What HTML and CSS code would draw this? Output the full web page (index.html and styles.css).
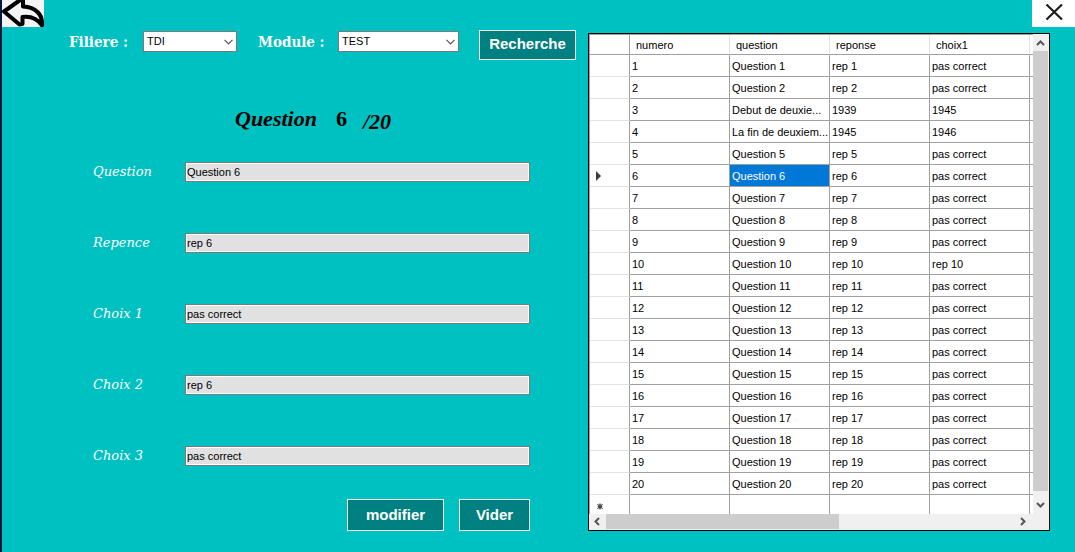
FILE: index.html
```html
<!DOCTYPE html>
<html lang="fr">
<head>
<meta charset="utf-8">
<title>Questions</title>
<link rel="stylesheet" href="styles.css">
</head>
<body>
<header class="topbar">
  <button class="back" type="button" aria-label="Retour">
    <svg width="42" height="27" viewBox="0 0 42 27"><path d="M19.500 -1 L2 11.500 L17.500 24.500 L20.500 24 L20.500 17 C29 16 35 18 40 25.500 C41 15 34 7 21 6.500 L21 -1 Z" fill="#f4f4f4" stroke="#000" stroke-width="4" stroke-linejoin="round"/></svg>
  </button>
  <button class="close" type="button" aria-label="Fermer">
    <svg width="43" height="27" viewBox="0 0 43 27"><path d="M14.500 4.500 L30 19.500 M30 4.500 L14.500 19.500" stroke="#1c1c1c" stroke-width="2.200" fill="none"/></svg>
  </button>
</header>
<main class="layout">
  <section class="editor">
    <form class="filters">
      <label class="filter-label" for="filiere">Filiere :</label>
      <span class="combo combo-small"><select id="filiere"><option>TDI</option></select><svg class="chevron" width="9" height="6" viewBox="0 0 9 6"><path d="M.5 .8 L4.500 4.800 L8.500 .8" fill="none" stroke="#555" stroke-width="1.200"/></svg></span>
      <label class="filter-label second" for="module">Module :</label>
      <span class="combo"><select id="module"><option>TEST</option></select><svg class="chevron" width="9" height="6" viewBox="0 0 9 6"><path d="M.5 .8 L4.500 4.800 L8.500 .8" fill="none" stroke="#555" stroke-width="1.200"/></svg></span>
      <button class="btn search" type="button">Recherche</button>
    </form>
    <h1 class="title"><span>Question</span><span class="number">6</span><span class="total">/20</span></h1>
    <form class="fields">
      <div class="field"><label for="question">Question</label><input id="question" type="text" value="Question 6"></div>
      <div class="field"><label for="reponse">Repence</label><input id="reponse" type="text" value="rep 6"></div>
      <div class="field"><label for="choix1">Choix 1</label><input id="choix1" type="text" value="pas correct"></div>
      <div class="field"><label for="choix2">Choix 2</label><input id="choix2" type="text" value="rep 6"></div>
      <div class="field"><label for="choix3">Choix 3</label><input id="choix3" type="text" value="pas correct"></div>
      <div class="actions"><button class="btn edit" type="button">modifier</button><button class="btn clear" type="button">Vider</button></div>
    </form>
  </section>
  <section class="grid-box">
    <div class="viewport">
      <table class="grid">
        <colgroup><col class="c-head"><col class="c-data"><col class="c-data"><col class="c-data"><col class="c-data"><col></colgroup>
        <thead><tr><th></th><th>numero</th><th>question</th><th>reponse</th><th>choix1</th><th></th></tr></thead>
        <tbody>
          <tr><th></th><td>1</td><td>Question 1</td><td>rep 1</td><td>pas correct</td><td></td></tr>
          <tr><th></th><td>2</td><td>Question 2</td><td>rep 2</td><td>pas correct</td><td></td></tr>
          <tr><th></th><td>3</td><td>Debut de deuxie...</td><td>1939</td><td>1945</td><td></td></tr>
          <tr><th></th><td>4</td><td>La fin de deuxiem...</td><td>1945</td><td>1946</td><td></td></tr>
          <tr><th></th><td>5</td><td>Question 5</td><td>rep 5</td><td>pas correct</td><td></td></tr>
          <tr><th><svg class="marker" width="5" height="10" viewBox="0 0 5 10"><path d="M0 0 L5 5 L0 10 Z" fill="#3c3c3c"/></svg></th><td>6</td><td class="selected">Question 6</td><td>rep 6</td><td>pas correct</td><td></td></tr>
          <tr><th></th><td>7</td><td>Question 7</td><td>rep 7</td><td>pas correct</td><td></td></tr>
          <tr><th></th><td>8</td><td>Question 8</td><td>rep 8</td><td>pas correct</td><td></td></tr>
          <tr><th></th><td>9</td><td>Question 9</td><td>rep 9</td><td>pas correct</td><td></td></tr>
          <tr><th></th><td>10</td><td>Question 10</td><td>rep 10</td><td>rep 10</td><td></td></tr>
          <tr><th></th><td>11</td><td>Question 11</td><td>rep 11</td><td>pas correct</td><td></td></tr>
          <tr><th></th><td>12</td><td>Question 12</td><td>rep 12</td><td>pas correct</td><td></td></tr>
          <tr><th></th><td>13</td><td>Question 13</td><td>rep 13</td><td>pas correct</td><td></td></tr>
          <tr><th></th><td>14</td><td>Question 14</td><td>rep 14</td><td>pas correct</td><td></td></tr>
          <tr><th></th><td>15</td><td>Question 15</td><td>rep 15</td><td>pas correct</td><td></td></tr>
          <tr><th></th><td>16</td><td>Question 16</td><td>rep 16</td><td>pas correct</td><td></td></tr>
          <tr><th></th><td>17</td><td>Question 17</td><td>rep 17</td><td>pas correct</td><td></td></tr>
          <tr><th></th><td>18</td><td>Question 18</td><td>rep 18</td><td>pas correct</td><td></td></tr>
          <tr><th></th><td>19</td><td>Question 19</td><td>rep 19</td><td>pas correct</td><td></td></tr>
          <tr><th></th><td>20</td><td>Question 20</td><td>rep 20</td><td>pas correct</td><td></td></tr>
          <tr class="new-row"><th><svg class="marker" width="8" height="7" viewBox="0 0 8 7"><circle cx="4" cy="3.500" r="2.300" fill="#444"/><path d="M4 .3 V6.700 M1.200 1.200 L6.800 5.800 M6.800 1.200 L1.200 5.800" stroke="#555" stroke-width="1"/></svg></th><td></td><td></td><td></td><td></td><td></td></tr>
        </tbody>
      </table>
    </div>
    <div class="vscroll">
      <svg class="arrow" width="16" height="17" viewBox="0 0 16 17"><path d="M4 11 L7.500 7.500 L11 11" fill="none" stroke="#555" stroke-width="2"/></svg>
      <div class="vthumb"></div>
      <svg class="arrow" width="16" height="23" viewBox="0 0 16 23"><path d="M4 12 L7.500 15.500 L11 12" fill="none" stroke="#555" stroke-width="2"/></svg>
    </div>
    <div class="hscroll">
      <svg class="arrow" width="17" height="16" viewBox="0 0 17 16"><path d="M10 4 L6.500 7.500 L10 11" fill="none" stroke="#555" stroke-width="2"/></svg>
      <div class="htrack"><div class="hthumb"></div></div>
      <svg class="arrow" width="17" height="16" viewBox="0 0 17 16"><path d="M6 4 L9.500 7.500 L6 11" fill="none" stroke="#555" stroke-width="2"/></svg>
    </div>
  </section>
</main>
</body>
</html>
```
FILE: styles.css
```css
* { box-sizing: border-box; }
html { background: #00c1c1; }
body {
  margin: 0;
  min-height: 100vh;
  background: #00c1c1;
  border-left: 2px solid #001a40;
  font-family: "Liberation Sans", Arial, sans-serif;
  font-size: 11px;
  color: #000;
}
svg { display: block; }

.topbar { display: flex; justify-content: space-between; }
.back, .close { padding: 0; border: 0; background: #fff; }
.back { background: #f4f4f4; }

.layout { display: flex; align-items: flex-start; padding: 3px 25px 21px 0; }
.editor { flex: 586 1 0; min-width: 0; }

.filters { display: flex; align-items: flex-start; padding: 0 12px 0 67px; }
.filter-label {
  width: 74px;
  font: bold 15px/24px "DejaVu Serif Condensed", "DejaVu Serif", serif;
  font-stretch: condensed;
  color: #fff;
  white-space: nowrap;
}
.filter-label.second { width: 80px; margin-left: 21px; }
.combo { position: relative; flex: 1; margin-top: 1px; }
.combo-small { flex: 0 0 94px; }
.combo select {
  display: block;
  width: 100%;
  height: 21px;
  padding: 0 0 1px 3px;
  appearance: none;
  border: 1px solid #7a7a7a;
  border-radius: 0;
  background: #fff;
  color: #000;
  font: 11px/18px "Liberation Sans", Arial, sans-serif;
}
.chevron { position: absolute; right: 4px; top: 8px; pointer-events: none; }
.btn {
  padding: 0;
  height: 32px;
  border: 1px solid #fff;
  background: #008080;
  color: #fff;
  font: bold 15px/18px "Liberation Sans", Arial, sans-serif;
}
.search { width: 97px; height: 30px; margin-left: 20px; padding-bottom: 3px; }

.title {
  display: flex;
  gap: 19px;
  margin: 45px 0 23px 233px;
  font: italic bold 22px/28px "Liberation Serif", serif;
}
.number { font-style: normal; }
.total { line-height: 34px; margin-left: -3px; }

.fields { padding: 0 58px 0 91px; }
.field { display: flex; align-items: center; height: 20px; margin-bottom: 51px; }
.field label {
  flex: 0 0 92px;
  font: italic 13px/20px "DejaVu Serif", serif;
  color: #fff;
}
.field input {
  flex: 1;
  min-width: 0;
  height: 20px;
  padding: 0 1px;
  border: 1px solid #7a7a7a;
  outline: 1px solid #fff;
  outline-offset: -2px;
  background: #e1e1e1;
  font: 11px/16px "Liberation Sans", Arial, sans-serif;
  color: #000;
}
.actions { display: flex; justify-content: flex-end; gap: 15px; margin-top: -18px; }
.edit { width: 97px; }
.clear { width: 71px; }

.grid-box {
  flex: 460 1 0;
  min-width: 0;
  display: grid;
  grid-template-columns: minmax(0, 1fr) 16px;
  margin-top: 3px;
  border: 1px solid #000;
  background: #f0f0f0;
}
.viewport { overflow: hidden; background: #fff; border: solid #a0a0a0; border-width: 1px 0 0 1px; }
.grid { width: 100%; table-layout: fixed; border-collapse: separate; border-spacing: 0; }
.c-head { width: 40px; }
.c-data { width: 100px; }
.grid th, .grid td {
  height: 22px;
  padding: 0 2px;
  border: solid #a0a0a0;
  border-width: 0 1px 1px 0;
  text-align: left;
  font-weight: normal;
  line-height: 18px;
  white-space: nowrap;
  overflow: hidden;
}
.grid th:last-child, .grid td:last-child { border-right: 0; padding: 0; }
.grid thead th { height: 20px; padding-left: 6px; border-right-color: #e3e3e3; }
.grid thead th:first-child { border-right-color: #a0a0a0; }
.grid tbody th { border-bottom-color: #e3e3e3; }
.grid .selected { background: #0078d7; color: #fff; }
.grid .new-row th, .grid .new-row td { height: 19px; border-bottom: 0; }
.marker { margin-left: 4px; }
.new-row .marker { margin-top: 4px; }

.vscroll { display: flex; flex-direction: column; padding-right: 1px; }
.vthumb { flex: 1; background: #cdcdcd; }
.hscroll { grid-column: 1 / -1; display: flex; padding-right: 17px; height: 16px; }
.htrack { flex: 1; padding-bottom: 1px; }
.hthumb { width: 57%; height: 100%; background: #cdcdcd; }
.arrow { flex: none; }
```
